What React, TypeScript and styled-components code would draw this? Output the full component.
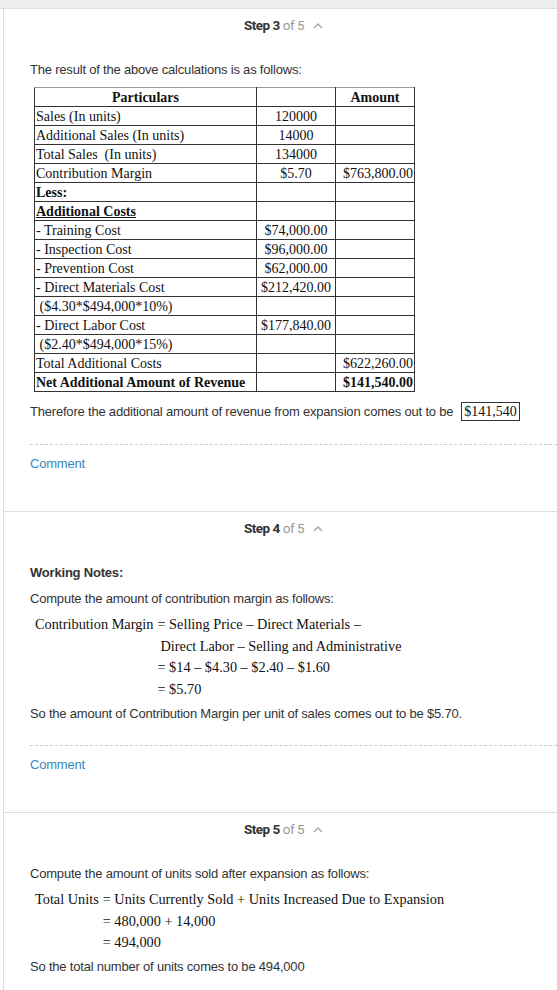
import React from "react";
import styled, { createGlobalStyle } from "styled-components";

const GlobalStyle = createGlobalStyle`
  body {
    margin: 0;
    background: #ffffff;
    font-family: "Liberation Sans", Arial, sans-serif;
    color: #333333;
  }
`;

const TopBar = styled.div`
  height: 8px;
  background: #eeeeee;
  border-bottom: 1px solid #dddddd;
`;

const Panel = styled.div`
  margin-left: 3px;
  border-left: 1px solid #dddddd;
`;

const Section = styled.section<{ $last?: boolean }>`
  border-bottom: ${({ $last }) => ($last ? "none" : "1px solid #dddddd")};
  padding-bottom: ${({ $last }) => ($last ? "20px" : "38px")};
`;

const StepHeader = styled.div`
  display: flex;
  justify-content: center;
  align-items: center;
  gap: 9px;
  padding: 8px 0 8px 6px;
  line-height: 16px;
  font-family: Roboto, "Liberation Sans", sans-serif;
  font-size: 13.5px;
  letter-spacing: -0.5px;
`;

const StepLabel = styled.span`
  color: #333333;
  font-weight: bold;
`;

const StepCount = styled.span`
  color: #999999;
  font-weight: normal;
`;

const Body = styled.div<{ $top: number }>`
  padding: ${({ $top }) => $top}px 0 0 26px;
`;

const Para = styled.p<{ $gap?: number; $bold?: boolean }>`
  margin: ${({ $gap }) => $gap ?? 0}px 0 0;
  font-size: 13px;
  line-height: 18px;
  letter-spacing: -0.2px;
  font-weight: ${({ $bold }) => ($bold ? "bold" : "normal")};
`;

const Table = styled.table`
  margin: 8px 0 0 4px;
  border-collapse: collapse;
  font-family: "Liberation Serif", "Times New Roman", serif;
  font-size: 14px;
  color: #111111;
`;

const Cell = styled.td<{ $align?: string; $bold?: boolean; $w?: number }>`
  border: 1px solid #333333;
  height: 18px;
  padding: 0 1px;
  line-height: 17px;
  white-space: pre;
  width: ${({ $w }) => ($w ? `${$w}px` : "auto")};
  text-align: ${({ $align }) => $align ?? "left"};
  font-weight: ${({ $bold }) => ($bold ? "bold" : "normal")};
`;

const HeadCell = styled(Cell)`
  border-top-color: #999999;
`;

const Underlined = styled.span`
  text-decoration: underline;
`;

const Boxed = styled.span`
  display: inline-block;
  margin-left: 8px;
  padding: 0 2px;
  border: 1px solid #333333;
  font-family: "Liberation Serif", "Times New Roman", serif;
  font-size: 14px;
  letter-spacing: 0;
  line-height: 17px;
  color: #111111;
`;

const Divider = styled.div<{ $gap: number }>`
  margin: ${({ $gap }) => $gap}px 0 0 26px;
  border-top: 1px dashed #cccccc;
`;

const CommentLink = styled.a`
  display: block;
  margin: 10px 0 0 26px;
  font-size: 13px;
  line-height: 18px;
  letter-spacing: -0.2px;
  color: #3588c0;
  text-decoration: none;
  cursor: pointer;
`;

const MathBlock = styled.div<{ $gap: number }>`
  display: grid;
  grid-template-columns: auto auto;
  justify-content: start;
  column-gap: 4px;
  margin: ${({ $gap }) => $gap}px 0 0 5px;
  font-family: "Liberation Serif", "Times New Roman", serif;
  font-size: 14.3px;
  line-height: 21.5px;
  color: #111111;
`;

const MathLine = styled.div<{ $indent?: number }>`
  grid-column: 2;
  padding-left: ${({ $indent }) => $indent ?? 0}px;
  white-space: nowrap;
`;

const MathLabel = styled.div`
  grid-column: 1;
  white-space: nowrap;
`;

const Chevron = () => (
  <svg width="10" height="7" viewBox="0 0 10 7">
    <polyline points="1,6 5,2 9,6" fill="none" stroke="#aaaaaa" strokeWidth="1.5" />
  </svg>
);

const Step = ({ n }: { n: number }) => (
  <StepHeader>
    <span>
      <StepLabel>Step {n}</StepLabel> <StepCount>of 5</StepCount>
    </span>
    <Chevron />
  </StepHeader>
);

type Row = {
  label: React.ReactNode;
  mid?: string;
  amount?: string;
  bold?: boolean;
};

const rows: Row[] = [
  { label: "Sales (In units)", mid: "120000" },
  { label: "Additional Sales (In units)", mid: "14000" },
  { label: "Total Sales  (In units)", mid: "134000" },
  { label: "Contribution Margin", mid: "$5.70", amount: "$763,800.00" },
  { label: "Less:", bold: true },
  { label: <Underlined>Additional Costs</Underlined>, bold: true },
  { label: "- Training Cost", mid: "$74,000.00" },
  { label: "- Inspection Cost", mid: "$96,000.00" },
  { label: "- Prevention Cost", mid: "$62,000.00" },
  { label: "- Direct Materials Cost", mid: "$212,420.00" },
  { label: " ($4.30*$494,000*10%)" },
  { label: "- Direct Labor Cost", mid: "$177,840.00" },
  { label: " ($2.40*$494,000*15%)" },
  { label: "Total Additional Costs", amount: "$622,260.00" },
  { label: "Net Additional Amount of Revenue", amount: "$141,540.00", bold: true },
];

const App = () => {
  return (
    <>
      <GlobalStyle />
      <TopBar />
      <Panel>
        <Section>
          <Step n={3} />
          <Body $top={20}>
            <Para>The result of the above calculations is as follows:</Para>
            <Table>
              <tbody>
                <tr>
                  <HeadCell $w={219} $align="center" $bold>
                    Particulars
                  </HeadCell>
                  <HeadCell $w={76} />
                  <HeadCell $w={76} $align="center" $bold>
                    Amount
                  </HeadCell>
                </tr>
                {rows.map((r, i) => (
                  <tr key={i}>
                    <Cell $bold={r.bold}>{r.label}</Cell>
                    <Cell $align="center">{r.mid}</Cell>
                    <Cell $align="right" $bold={r.bold}>
                      {r.amount}
                    </Cell>
                  </tr>
                ))}
              </tbody>
            </Table>
            <Para $gap={10}>
              Therefore the additional amount of revenue from expansion comes out to be
              <Boxed>$141,540</Boxed>
            </Para>
          </Body>
          <Divider $gap={23} />
          <CommentLink>Comment</CommentLink>
        </Section>

        <Section>
          <Step n={4} />
          <Body $top={20}>
            <Para $bold>Working Notes:</Para>
            <Para $gap={8}>Compute the amount of contribution margin as follows:</Para>
            <MathBlock $gap={6}>
              <MathLabel>Contribution Margin</MathLabel>
              <MathLine>= Selling Price – Direct Materials –</MathLine>
              <MathLine $indent={3}>Direct Labor – Selling and Administrative</MathLine>
              <MathLine>= $14 – $4.30 – $2.40 – $1.60</MathLine>
              <MathLine>= $5.70</MathLine>
            </MathBlock>
            <Para $gap={5}>
              So the amount of Contribution Margin per unit of sales comes out to be $5.70.
            </Para>
          </Body>
          <Divider $gap={22} />
          <CommentLink>Comment</CommentLink>
        </Section>

        <Section $last>
          <Step n={5} />
          <Body $top={20}>
            <Para>Compute the amount of units sold after expansion as follows:</Para>
            <MathBlock $gap={6}>
              <MathLabel>Total Units</MathLabel>
              <MathLine>= Units Currently Sold + Units Increased Due to Expansion</MathLine>
              <MathLine>= 480,000 + 14,000</MathLine>
              <MathLine>= 494,000</MathLine>
            </MathBlock>
            <Para $gap={4}>So the total number of units comes to be 494,000</Para>
          </Body>
        </Section>
      </Panel>
    </>
  );
};

export default App;
